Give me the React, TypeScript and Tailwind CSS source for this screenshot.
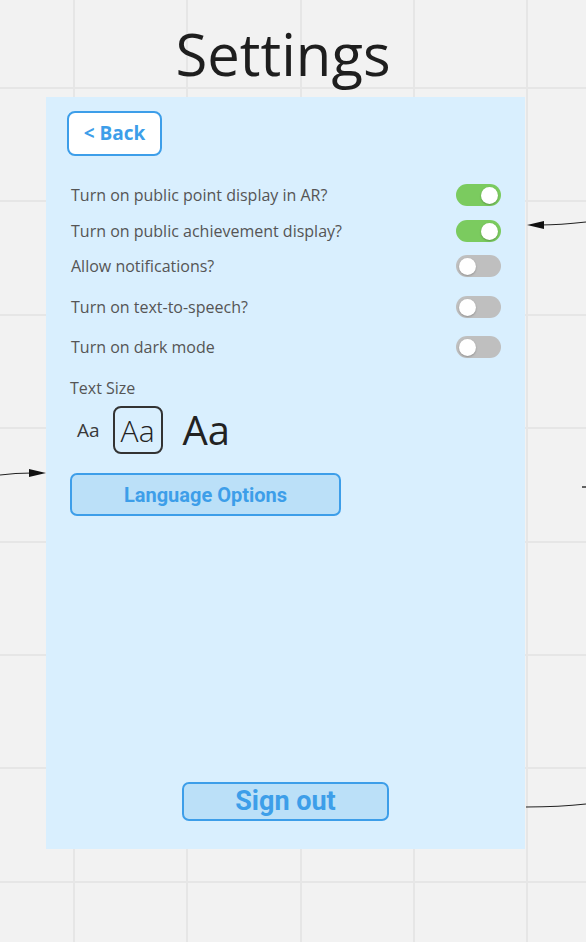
import { useState } from 'react';

const gridX = [74, 187, 301, 414, 527];
const gridY = [88, 201, 315, 428, 542, 655, 768, 882];

type Row = { label: string; on: boolean; gap: string };

const initialRows: Row[] = [
  { label: 'Turn on public point display in AR?', on: true, gap: 'mt-[28px]' },
  { label: 'Turn on public achievement display?', on: true, gap: 'mt-[14px]' },
  { label: 'Allow notifications?', on: false, gap: 'mt-[13px]' },
  { label: 'Turn on text-to-speech?', on: false, gap: 'mt-[19px]' },
  { label: 'Turn on dark mode', on: false, gap: 'mt-[18px]' },
];

function Toggle({ on, onClick }: { on: boolean; onClick: () => void }) {
  return (
    <button
      onClick={onClick}
      className={`flex items-center w-[45px] h-[22px] rounded-full px-[3px] ${
        on ? 'bg-[#7bcb5f] justify-end' : 'bg-[#bfbfbf] justify-start'
      }`}
    >
      <span className="block w-[17px] h-[17px] rounded-full bg-white shadow-[0_1px_2px_rgba(0,0,0,0.25)]" />
    </button>
  );
}

function Canvas() {
  return (
    <svg className="absolute inset-0" width="586" height="942">
      {gridX.map((x) => (
        <line key={'x' + x} x1={x} y1={0} x2={x} y2={942} stroke="#e6e6e6" strokeWidth="2" />
      ))}
      {gridY.map((y) => (
        <line key={'y' + y} x1={0} y1={y} x2={586} y2={y} stroke="#e6e6e6" strokeWidth="2" />
      ))}
      {/* connectors */}
      <path d="M586 222 Q560 225 540 225" fill="none" stroke="#222" strokeWidth="1.2" />
      <polygon points="527,225 544,221 544,229" fill="#111" />
      <path d="M0 475 Q15 473 32 473" fill="none" stroke="#222" strokeWidth="1.2" />
      <polygon points="46,473 29,469 29,477" fill="#111" />
      <line x1="582" y1="487" x2="586" y2="487" stroke="#333" strokeWidth="1.5" />
      <path d="M526 807 Q560 807 586 804" fill="none" stroke="#222" strokeWidth="1.2" />
    </svg>
  );
}

export default function App() {
  const [rows, setRows] = useState(initialRows);
  const [size, setSize] = useState(1);

  return (
    <div className="relative w-[586px] h-[942px] overflow-hidden bg-[#f2f2f2] font-['Open_Sans',sans-serif]">
      <Canvas />

      <div className="relative flex flex-col">
        <h1 className="pt-[25px] pr-[20px] text-center text-[58px] leading-none text-[#1e1e1e]">
          Settings
        </h1>

        {/* Panel */}
        <div className="ml-[46px] mt-[14px] flex h-[752px] w-[479px] flex-col bg-[#d9effe]">
          <button className="ml-[21px] mt-[14px] h-[45px] w-[95px] rounded-[8px] border-2 border-[#3d9ee9] bg-white text-[19px] font-bold text-[#3d9ee9]">
            &lt; Back
          </button>

          {rows.map((r, i) => (
            <div key={r.label} className={`flex h-[22px] items-center justify-between pl-[25px] pr-[24px] ${r.gap}`}>
              <span className="text-[16px] text-[#555]">{r.label}</span>
              <Toggle
                on={r.on}
                onClick={() =>
                  setRows(rows.map((x, j) => (j === i ? { ...x, on: !x.on } : x)))
                }
              />
            </div>
          ))}

          <p className="ml-[24px] mt-[20px] h-[20px] text-[16px] leading-[20px] text-[#555]">Text Size</p>

          <div className="mt-[8px] flex h-[48px] items-center pl-[31px] text-[#222]">
            <button
              onClick={() => setSize(0)}
              className={`text-[19px] text-[#3a3a3a] ${size === 0 ? 'rounded-[8px] border-2 border-[#333]' : ''}`}
            >
              Aa
            </button>
            <button
              onClick={() => setSize(1)}
              className={`ml-[13px] flex h-[48px] w-[50px] items-center justify-center rounded-[8px] text-[30px] font-light ${
                size === 1 ? 'border-2 border-[#333]' : ''
              }`}
            >
              Aa
            </button>
            <button
              onClick={() => setSize(2)}
              className={`ml-[20px] text-[40px] ${size === 2 ? 'rounded-[8px] border-2 border-[#333]' : ''}`}
            >
              Aa
            </button>
          </div>

          <button className="ml-[24px] mt-[19px] h-[43px] w-[271px] rounded-[7px] border-2 border-[#3d9ee9] bg-[#bbe0f8] font-['Roboto',sans-serif] text-[20px] font-bold text-[#3d9ee9]">
            Language Options
          </button>

          <button className="mx-auto mt-auto mb-[28px] h-[39px] w-[207px] rounded-[7px] border-2 border-[#3d9ee9] bg-[#bbe0f8] font-['Roboto',sans-serif] text-[27px] font-bold leading-none text-[#3d9ee9]">
            Sign out
          </button>
        </div>
      </div>
    </div>
  );
}
